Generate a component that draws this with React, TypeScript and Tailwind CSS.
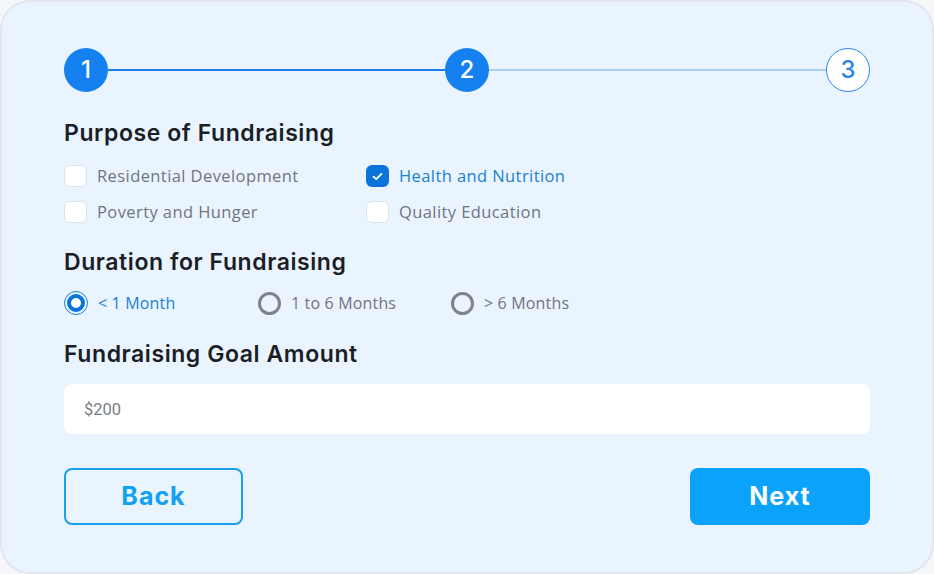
import React, { useState } from "react";

const purposes = [
  "Residential Development",
  "Health and Nutrition",
  "Poverty and Hunger",
  "Quality Education",
];

const durations = ["< 1 Month", "1 to 6 Months", "> 6 Months"];

const Step = ({ n, done }: { n: number; done: boolean }) => (
  <div
    className={`w-11 h-11 rounded-full flex items-center justify-center shrink-0 text-[24px] font-medium leading-none ${
      done
        ? "bg-[#1580f0] text-white"
        : "bg-white border-[1.5px] border-[#2e86ec] text-[#2a84ea]"
    }`}
  >
    {n}
  </div>
);

export default function App() {
  const [checked, setChecked] = useState<string[]>(["Health and Nutrition"]);
  const [duration, setDuration] = useState("< 1 Month");
  const [amount, setAmount] = useState("");

  const toggle = (p: string) =>
    setChecked((c) => (c.includes(p) ? c.filter((x) => x !== p) : [...c, p]));

  return (
    <div className="w-[934px] h-[574px] bg-[#f6f7f9] font-['Inter',sans-serif]">
      <div className="h-full rounded-[30px] border-2 border-[#e3e6ee] bg-[#e9f4fe] pl-[62px] pr-[62px] pt-[46px]">
        {/* Stepper */}
        <div className="flex items-center">
          <Step n={1} done />
          <div className="flex-1 h-[2px] bg-[#1d7fe8]" />
          <Step n={2} done />
          <div className="flex-1 h-[2px] bg-[#a9cff7]" />
          <Step n={3} done={false} />
        </div>

        <h2 className="mt-[27px] text-[23px] leading-[28px] tracking-[0.025em] font-semibold text-[#1b1e26]">
          Purpose of Fundraising
        </h2>
        <div className="mt-[18px] grid grid-cols-[302px_auto] gap-y-[14px] font-['Open_Sans',sans-serif]">
          {purposes.map((p) => {
            const on = checked.includes(p);
            return (
              <label
                key={p}
                className="flex items-center gap-[10px] cursor-pointer"
                onClick={() => toggle(p)}
              >
                <span
                  className={`w-[23px] h-[22px] rounded-[6px] flex items-center justify-center ${
                    on
                      ? "bg-[#0b74db]"
                      : "bg-white border border-[#dfe3ea]"
                  }`}
                >
                  {on && (
                    <svg width="11" height="9" viewBox="0 0 11 9" fill="none">
                      <path
                        d="M1.5 4.6 4.2 7.2 9.5 1.8"
                        stroke="white"
                        strokeWidth="1.8"
                        strokeLinecap="round"
                        strokeLinejoin="round"
                      />
                    </svg>
                  )}
                </span>
                <span
                  className={`text-[16.5px] leading-[22px] tracking-[0.025em] ${
                    on ? "text-[#1a80d6]" : "text-[#71757e]"
                  }`}
                >
                  {p}
                </span>
              </label>
            );
          })}
        </div>

        <h2 className="mt-[25px] text-[23px] leading-[28px] tracking-[0.025em] font-semibold text-[#1b1e26]">
          Duration for Fundraising
        </h2>
        <div className="mt-[15px] flex items-center font-['Open_Sans',sans-serif]">
          {durations.map((d, i) => {
            const on = duration === d;
            return (
              <label
                key={d}
                className={`flex items-center gap-[10px] cursor-pointer ${
                  i === 0 ? "w-[194px]" : i === 1 ? "w-[193px]" : ""
                }`}
                onClick={() => setDuration(d)}
              >
                {on ? (
                  <span className="w-6 h-6 rounded-full border border-[#1a7fe0] p-[2px] flex">
                    <span className="w-full h-full rounded-full border-[4px] border-[#0b74db] bg-white" />
                  </span>
                ) : (
                  <span className="w-[23px] h-[23px] rounded-full border-[3px] border-[#7f828a]" />
                )}
                <span
                  className={`text-[16px] leading-[24px] tracking-[0.01em] ${
                    on ? "text-[#1a80d6]" : "text-[#71757e]"
                  }`}
                >
                  {d}
                </span>
              </label>
            );
          })}
        </div>

        <h2 className="mt-[25px] text-[23px] leading-[28px] tracking-[0.025em] font-semibold text-[#1b1e26]">
          Fundraising Goal Amount
        </h2>
        <input
          value={amount}
          onChange={(e) => setAmount(e.target.value)}
          placeholder="$200"
          className="mt-[16px] w-full h-[50px] rounded-[8px] bg-white px-5 text-[16.5px] font-['Roboto',sans-serif] text-[#444] placeholder:text-[#7a7d84] outline-none"
        />

        <div className="mt-[34px] flex justify-between">
          <button className="w-[179px] h-[57px] rounded-[8px] border-2 border-[#1ba0ef] text-[#12a0f2] text-[25px] tracking-[0.04em] font-bold">
            Back
          </button>
          <button className="w-[180px] h-[57px] rounded-[8px] bg-[#0aa2fb] text-white text-[25px] tracking-[0.04em] font-bold">
            Next
          </button>
        </div>
      </div>
    </div>
  );
}
